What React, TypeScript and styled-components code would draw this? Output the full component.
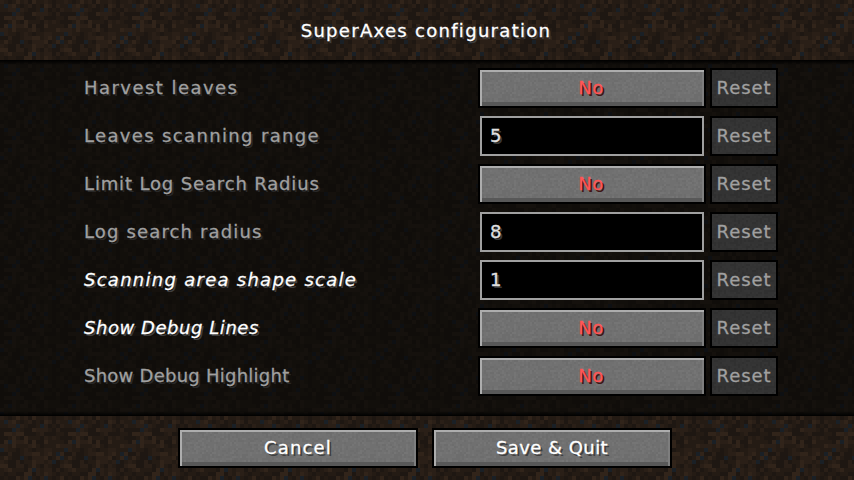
import { createGlobalStyle, styled } from 'styled-components';

const makeTile = (seed: number, cols: number, rows: number, size: number, pick: (r: number) => string) => {
  let s = seed
  const rnd = () => {
    s = (s * 16807) % 2147483647
    return (s % 1000) / 1000
  }
  let rects = ''
  for (let y = 0; y < rows; y++) {
    for (let x = 0; x < cols; x++) {
      rects += `<rect x='${x * size}' y='${y * size}' width='${size}' height='${size}' fill='${pick(rnd())}'/>`
    }
  }
  const svg = `<svg xmlns='http://www.w3.org/2000/svg' width='${cols * size}' height='${rows * size}' shape-rendering='crispEdges'>${rects}</svg>`
  return `url("data:image/svg+xml,${encodeURIComponent(svg)}")`
}

const dirt = makeTile(4711, 16, 16, 4, r => {
  if (r < 0.04) return '#1a2026'
  if (r < 0.3) return '#1e1712'
  if (r < 0.6) return '#241b14'
  if (r < 0.85) return '#2a1f17'
  return '#31241a'
})

const darkDirt = makeTile(4711, 16, 16, 4, r => {
  if (r < 0.04) return '#0e1013'
  if (r < 0.35) return '#100d0a'
  if (r < 0.7) return '#120f0b'
  return '#15110d'
})

const stone = makeTile(977, 32, 18, 2, r => {
  if (r < 0.25) return '#6d6d6d'
  if (r < 0.6) return '#707070'
  if (r < 0.85) return '#727272'
  return '#757575'
})

const darkStone = makeTile(977, 32, 18, 2, r => {
  if (r < 0.3) return '#303030'
  if (r < 0.7) return '#333333'
  return '#353535'
})

const GlobalStyle = createGlobalStyle`
  html, body {
    margin: 0;
    padding: 0;
    background: #120f0b;
  }
  body {
    font-family: "DejaVu Sans", sans-serif;
    font-size: 18px;
    -webkit-text-stroke: 0.3px currentColor;
  }
`

const Screen = styled.div`
  display: flex;
  flex-direction: column;
  width: 854px;
  height: 480px;
  overflow: hidden;
`
const Header = styled.header`
  display: flex;
  align-items: center;
  justify-content: center;
  height: 60px;
  padding-right: 2px;
  box-sizing: border-box;
  background-image: ${dirt};
`
const Title = styled.h1`
  margin: 0;
  font-size: 18px;
  font-weight: normal;
  letter-spacing: 1.3px;
  color: #fff;
  text-shadow: 2px 2px 0 #3f3f3f;
`
const List = styled.main`
  flex: 1;
  display: flex;
  flex-direction: column;
  padding: 4px 0 0 84px;
  background-image:
    linear-gradient(#000 0, transparent 5px),
    linear-gradient(transparent calc(100% - 5px), #000 100%),
    ${darkDirt};
`
const Row = styled.div`
  display: flex;
  align-items: center;
  height: 48px;
`
const Label = styled.span<{ $changed?: boolean; $track: number }>`
  width: 396px;
  padding-bottom: 2px;
  white-space: nowrap;
  letter-spacing: ${props => props.$track}px;
  color: ${props => (props.$changed ? '#fff' : '#a0a0a0')};
  font-style: ${props => (props.$changed ? 'italic' : 'normal')};
  text-shadow: 2px 2px 0 ${props => (props.$changed ? '#3f3f3f' : '#282828')};
`
const StoneButton = styled.button<{ $width: number; $track?: number }>`
  width: ${props => props.$width}px;
  height: 36px;
  padding: 0 0 2px;
  border: 0;
  outline: 2px solid #000;
  background-image: ${stone};
  box-shadow:
    inset 2px 2px 0 #adadad,
    inset -2px 0 0 #7e7e7e,
    inset 0 -4px 0 #585858;
  font: inherit;
  letter-spacing: ${props => props.$track ?? 1.15}px;
  color: #fff;
  text-shadow: 2px 2px 0 #3f3f3f;
`
const ToggleButton = styled(StoneButton)`
  padding-right: 2px;
  color: #ff5555;
  text-shadow: 2px 2px 0 #3f1515;
`
const ValueField = styled.div`
  display: flex;
  align-items: center;
  box-sizing: border-box;
  width: 224px;
  height: 40px;
  padding: 0 8px 2px;
  border: 2px solid #a0a0a0;
  background: #000;
  color: #e0e0e0;
  text-shadow: 2px 2px 0 #383838;
`
const ResetButton = styled.button`
  width: 64px;
  height: 36px;
  margin-left: 8px;
  padding: 0 0 2px;
  border: 0;
  outline: 2px solid #000;
  background-image: ${darkStone};
  font: inherit;
  letter-spacing: 0.9px;
  color: #a0a0a0;
`
const Footer = styled.footer`
  display: flex;
  align-items: center;
  justify-content: center;
  gap: 18px;
  height: 64px;
  padding-right: 4px;
  box-sizing: border-box;
  background-image: ${dirt};
`

type Option = {
  label: string
  track: number
  changed?: boolean
  value?: string
}

const options: Option[] = [
  { label: 'Harvest leaves', track: 1.45 },
  { label: 'Leaves scanning range', track: 1.35, value: '5' },
  { label: 'Limit Log Search Radius', track: 0.85 },
  { label: 'Log search radius', track: 1.15, value: '8' },
  { label: 'Scanning area shape scale', track: 1.27, changed: true, value: '1' },
  { label: 'Show Debug Lines', track: 0.55, changed: true },
  { label: 'Show Debug Highlight', track: 0.25 },
]

const App = () => {
  return (
    <Screen>
      <GlobalStyle />
      <Header>
        <Title>SuperAxes configuration</Title>
      </Header>
      <List>
        {options.map(item => (
          <Row key={item.label}>
            <Label $changed={item.changed} $track={item.track}>{item.label}</Label>
            {item.value
              ? <ValueField>{item.value}</ValueField>
              : <ToggleButton $width={224} $track={0.6}>No</ToggleButton>}
            <ResetButton>Reset</ResetButton>
          </Row>
        ))}
      </List>
      <Footer>
        <StoneButton $width={236}>Cancel</StoneButton>
        <StoneButton $width={236} $track={0.45}>Save &amp; Quit</StoneButton>
      </Footer>
    </Screen>
  )
}

export default App
